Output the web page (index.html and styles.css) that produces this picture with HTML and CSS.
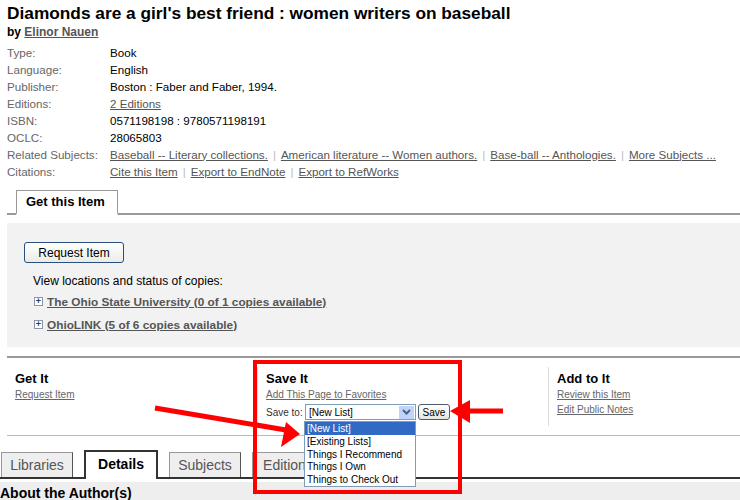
FILE: index.html
```html
<!DOCTYPE html>
<html>
<head>
    <title>Diamonds are a girl's best friend</title>
    <link rel="stylesheet" href="styles.css">
</head>
<body>
    <div class="record">
        <h1 class="title">Diamonds are a girl's best friend : women writers on baseball</h1>
        <div class="byline">by <a href="#">Elinor Nauen</a></div>

        <div class="details">
            <span class="lbl">Type:</span><span>Book</span>
            <span class="lbl">Language:</span><span>English</span>
            <span class="lbl">Publisher:</span><span>Boston : Faber and Faber, 1994.</span>
            <span class="lbl">Editions:</span><span><a href="#">2 Editions</a></span>
            <span class="lbl">ISBN:</span><span>0571198198 : 9780571198191</span>
            <span class="lbl">OCLC:</span><span>28065803</span>
            <span class="lbl">Related Subjects:</span>
            <span class="links"><a href="#">Baseball -- Literary collections.</a><i>|</i><a href="#">American literature -- Women authors.</a><i>|</i><a href="#">Base-ball -- Anthologies.</a><i>|</i><a href="#">More Subjects ...</a></span>
            <span class="lbl">Citations:</span>
            <span class="links"><a href="#">Cite this Item</a><i>|</i><a href="#">Export to EndNote</a><i>|</i><a href="#">Export to RefWorks</a></span>
        </div>

        <div class="tabbar">
            <span class="tab">Get this Item</span>
        </div>

        <div class="holdings">
            <button class="btn-request">Request Item</button>
            <p class="view">View locations and status of copies:</p>
            <div class="lib"><span class="plus">+</span><a href="#">The Ohio State University (0 of 1 copies available)</a></div>
            <div class="lib"><span class="plus">+</span><a href="#">OhioLINK (5 of 6 copies available)</a></div>
        </div>
    </div>

    <div class="actions">
        <div class="col">
            <h3>Get It</h3>
            <a href="#">Request Item</a>
        </div>
        <div class="col sep">
            <h3>Save It</h3>
            <a href="#">Add This Page to Favorites</a>
            <div class="save-row">
                <span class="save-lbl">Save to:</span>
                <div class="select">
                    <span class="sel-text">[New List]</span>
                    <span class="sel-arrow">
                        <svg width="9" height="6" viewBox="0 0 9 6"><path d="M1 1 L4.5 4.5 L8 1" fill="none" stroke="#4d6185" stroke-width="2"/></svg>
                    </span>
                </div>
                <button class="btn-save">Save</button>
                <ul class="listbox">
                    <li class="hl">[New List]</li>
                    <li>[Existing Lists]</li>
                    <li>Things I Recommend</li>
                    <li>Things I Own</li>
                    <li>Things to Check Out</li>
                </ul>
            </div>
        </div>
        <div class="col sep">
            <h3>Add to It</h3>
            <a href="#">Review this Item</a>
            <a href="#">Edit Public Notes</a>
        </div>
    </div>

    <div class="tabs">
        <span class="t">Libraries</span>
        <span class="t active">Details</span>
        <span class="t">Subjects</span>
        <span class="t">Editions</span>
    </div>
    <div class="about">About the Author(s)</div>

    <svg class="annot" width="740" height="500" viewBox="0 0 740 500">
        <rect x="255" y="362" width="205" height="130" fill="none" stroke="#f00" stroke-width="4"/>
        <path d="M155 408 L286 430" stroke="#f00" stroke-width="5"/>
        <path d="M300 434 L281 447 L286 422 Z" fill="#f00"/>
        <path d="M468 411 L503 411" stroke="#f00" stroke-width="5"/>
        <path d="M450 411 L470 400 L470 423 Z" fill="#f00"/>
    </svg>
</body>
</html>
```

FILE: styles.css
```css
body {
    margin: 0;
    font-family: "Liberation Sans", Arial, sans-serif;
    font-size: 12px;
    color: #000;
    background: #fff;
    position: relative;
    width: 740px;
    height: 500px;
    overflow: hidden;
}
a {
    color: #555;
}
.record {
    padding-left: 7px;
}
.title {
    margin: 0;
    padding-top: 2px;
    font-size: 17.3px;
    line-height: 22px;
}
.byline {
    font-weight: bold;
    font-size: 12px;
    line-height: 14px;
    margin-top: 1px;
}
.details {
    display: grid;
    grid-template-columns: 103px 1fr;
    grid-auto-rows: 17px;
    align-items: center;
    margin-top: 5px;
    line-height: 14px;
    font-size: 11.6px;
    white-space: nowrap;
}
.details .lbl {
    color: #666;
}
.links i {
    font-style: normal;
    color: #bbb;
    margin: 0 5px;
}
.tabbar {
    margin-top: 10px;
    padding-left: 9px;
    height: 23px;
    border-bottom: 2px solid #999;
    display: flex;
    align-items: flex-end;
}
.tab {
    display: block;
    width: 100px;
    height: 22px;
    margin-bottom: -2px;
    border: 1px solid #999;
    border-bottom: 2px solid #fff;
    background: #fff;
    font-weight: bold;
    font-size: 13px;
    line-height: 22px;
    text-indent: 9px;
}
.holdings {
    margin-top: 8px;
    height: 124px;
    background: #f2f2f2;
    padding: 19px 0 0 17px;
    box-sizing: border-box;
}
.btn-request {
    width: 100px;
    height: 21px;
    border: 1px solid #2b4f7d;
    border-radius: 3px;
    background: linear-gradient(#fff, #ebebe6);
    font-family: inherit;
    font-size: 12px;
    padding: 0;
    display: block;
}
.view {
    margin: 11px 0 0 9px;
    line-height: 14px;
}
.lib {
    margin: 4px 0 0 10px;
    height: 19px;
    display: flex;
    align-items: center;
    font-weight: bold;
    font-size: 11.8px;
}
.lib + .lib {
    margin-top: 4px;
}
.plus {
    width: 7px;
    height: 7px;
    border: 1px solid #8a97a8;
    background: #fff;
    color: #2a3f6e;
    font-size: 9px;
    line-height: 7px;
    text-align: center;
    margin-right: 4px;
    font-weight: bold;
}
.actions {
    margin: 9px 0 0 7px;
    border-top: 2px solid #999;
    border-bottom: 1px solid #bbb;
    height: 80px;
    display: grid;
    grid-template-columns: 250px 291px 1fr;
    padding-top: 11px;
    box-sizing: border-box;
}
.col {
    padding-left: 8px;
    height: 57px;
    display: flex;
    flex-direction: column;
    align-items: flex-start;
}
.col.sep {
    border-left: 1px solid #ddd;
    margin-top: -2px;
    padding-top: 2px;
}
.col h3 {
    margin: 2px 0 0;
    font-size: 13px;
    line-height: 16px;
}
.col a {
    font-size: 10px;
    line-height: 15px;
    color: #666;
}
.save-row {
    position: relative;
    display: flex;
    align-items: center;
    margin-top: 2px;
    font-size: 10px;
}
.save-lbl {
    width: 39px;
    color: #333;
}
.select {
    width: 109px;
    height: 14px;
    border: 1px solid #7f9db9;
    background: #fff;
    display: flex;
    align-items: center;
    justify-content: space-between;
}
.sel-text {
    padding-left: 3px;
    font-size: 10px;
}
.sel-arrow {
    width: 15px;
    height: 13px;
    background: #c1d3fb;
    display: flex;
    align-items: center;
    justify-content: center;
    margin-right: 1px;
}
.btn-save {
    margin-left: 2px;
    height: 16px;
    width: 32px;
    padding: 0;
    border: 1px solid #4d5a6a;
    border-radius: 3px;
    background: linear-gradient(#fff, #e6e6e0);
    font-family: inherit;
    font-size: 10px;
}
.listbox {
    position: absolute;
    left: 38px;
    top: 17px;
    width: 110px;
    margin: 0;
    padding: 0;
    list-style: none;
    border: 1px solid #7f9db9;
    background: #fff;
    z-index: 2;
}
.listbox li {
    height: 12.8px;
    line-height: 13px;
    padding-left: 2px;
    font-size: 10px;
}
.listbox li.hl {
    background: #316ac5;
    color: #fff;
}
.tabs {
    margin-top: 15px;
    padding-left: 1px;
    display: flex;
    gap: 11px;
    align-items: flex-end;
    border-bottom: 2px solid #333;
    height: 26px;
}
.t {
    width: 70px;
    height: 24px;
    border: 1px solid #999;
    border-right-color: #555;
    border-bottom: none;
    background: #eee;
    color: #555;
    font-size: 14px;
    line-height: 24px;
    text-align: center;
}
.t.active {
    height: 25px;
    border: 2px solid #333;
    border-bottom: none;
    background: #fff;
    color: #000;
    font-weight: bold;
    margin-bottom: -2px;
    padding-bottom: 2px;
}
.about {
    margin-top: 3px;
    background: #eee;
    font-weight: bold;
    font-size: 14px;
    line-height: 22px;
}
.annot {
    position: absolute;
    left: 0;
    top: 0;
    pointer-events: none;
    z-index: 5;
}
```
